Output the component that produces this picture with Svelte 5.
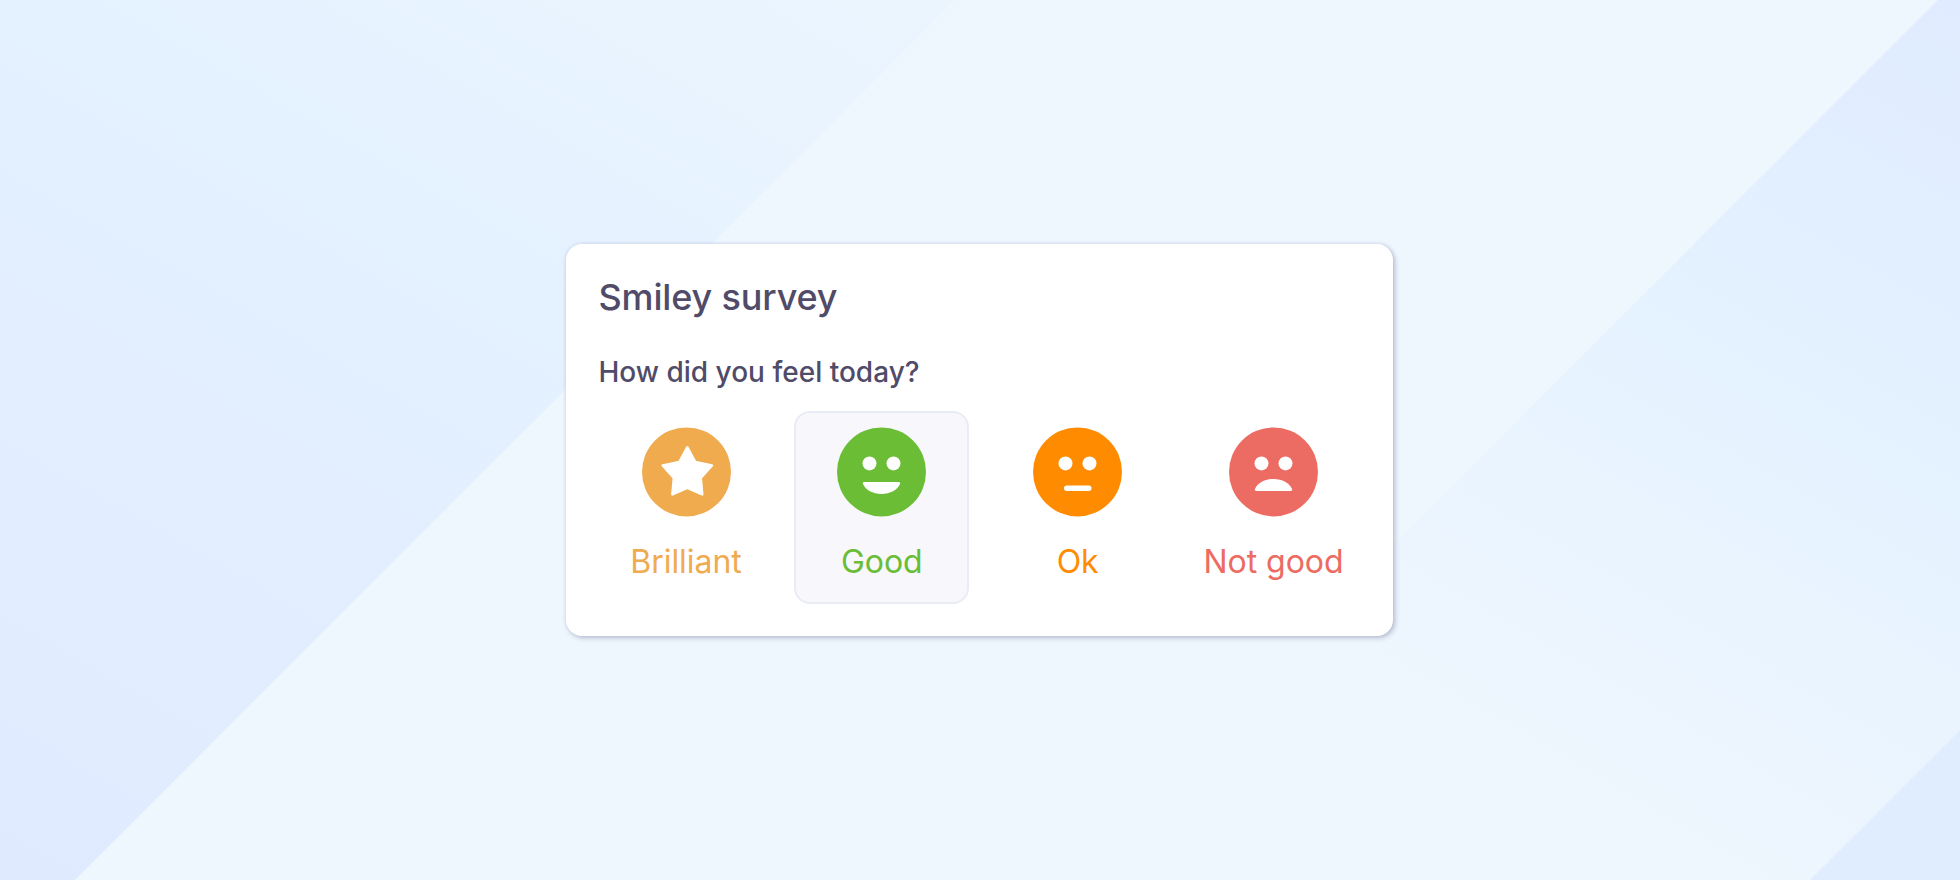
<script>
  const options = [
    { id: 'brilliant', label: 'Brilliant', color: '#f0ab4e' },
    { id: 'good', label: 'Good', color: '#6abd35' },
    { id: 'ok', label: 'Ok', color: '#ff8c00' },
    { id: 'bad', label: 'Not good', color: '#ec6b62' }
  ];
  let selected = $state('good');
</script>

<main class="page">
  <svg class="backdrop" viewBox="0 0 1960 880" aria-hidden="true">
    <defs>
      <linearGradient id="left" gradientUnits="userSpaceOnUse" x1="955" y1="0" x2="334" y2="1076">
        <stop offset="0" stop-color="#ebf5fe" />
        <stop offset=".4" stop-color="#e4f1ff" />
        <stop offset="1" stop-color="#e0eaff" />
      </linearGradient>
      <linearGradient id="right" gradientUnits="userSpaceOnUse" x1="1960" y1="0" x2="1530" y2="745">
        <stop offset="0" stop-color="#e0ebff" />
        <stop offset=".4" stop-color="#e3f1ff" />
        <stop offset="1" stop-color="#eef6fe" />
      </linearGradient>
    </defs>
    <path d="M0 0H955L75 880H0Z" fill="url(#left)" />
    <path d="M1938 0H1960V730L1810 880H1058Z" fill="url(#right)" />
    <path d="M1960 730V880H1810Z" fill="#dfedfe" />
  </svg>

  <section class="card">
    <h1>Smiley survey</h1>
    <h2>How did you feel today?</h2>
    <div class="options">
      {#each options as option}
        <button
          class="option"
          class:selected={selected === option.id}
          style:color={option.color}
          onclick={() => (selected = option.id)}
        >
          <svg class="face" viewBox="0 -0.4 89 89" aria-hidden="true">
            <circle cx="44.5" cy="44.5" r="44.5" fill="currentColor" />
            {#if option.id === 'brilliant'}
              <path
                d="M45.3 20 53.3 34.6 69.9 38 58.7 50.6 60.2 67 45.3 60.4 30.4 67 31.9 50.6 20.7 38 37.3 34.6Z"
                fill="#fff" stroke="#fff" stroke-width="2.6" stroke-linejoin="round"
              />
            {:else}
              <circle cx="32.5" cy="36" r="7" fill="#fff" />
              <circle cx="56.5" cy="36" r="7" fill="#fff" />
              {#if option.id === 'good'}
                <path d="M27.2 54.5H61.8Q63.7 54.5 63.1 56.4C60.6 62.6 53.2 66.5 44.5 66.5S28.4 62.6 25.9 56.4Q25.3 54.5 27.2 54.5Z" fill="#fff" />
              {:else if option.id === 'ok'}
                <rect x="31" y="58" width="27.5" height="5.5" rx="2.7" fill="#fff" />
              {:else}
                <path d="M27.2 63.5H61.8Q63.7 63.5 63.1 61.6C60.6 55.4 53.2 51.5 44.5 51.5S28.4 55.4 25.9 61.6Q25.3 63.5 27.2 63.5Z" fill="#fff" />
              {/if}
            {/if}
          </svg>
          <span class="label">{option.label}</span>
        </button>
      {/each}
    </div>
  </section>
</main>

<style>
  :global(body) {
    margin: 0;
  }
  .page {
    position: relative;
    box-sizing: border-box;
    width: 1960px;
    height: 880px;
    padding-right: 1px;
    display: flex;
    align-items: center;
    justify-content: center;
    background: #eef6fe;
    font-family: Inter, sans-serif;
  }
  .backdrop {
    position: absolute;
    inset: 0;
    width: 100%;
    height: 100%;
  }
  .card {
    position: relative;
    box-sizing: border-box;
    width: 827px;
    height: 392px;
    padding: 31px 32px 32px 32.5px;
    display: flex;
    flex-direction: column;
    background: #fff;
    border-radius: 16px;
    box-shadow: 2px 2px 5px rgba(70, 80, 110, 0.3), 0 0 4px rgba(70, 90, 130, 0.13);
  }
  h1,
  h2 {
    margin: 0;
    color: #504b68;
    font-weight: 500;
    white-space: nowrap;
  }
  h1 {
    font-size: 36px;
    line-height: 44px;
    letter-spacing: -0.15px;
  }
  h2 {
    margin-top: 35px;
    font-size: 28px;
    line-height: 36px;
  }
  .options {
    margin-top: 21px;
    display: flex;
    justify-content: space-between;
  }
  .option {
    box-sizing: border-box;
    width: 175px;
    height: 193px;
    padding: 14px 0 0;
    display: flex;
    flex-direction: column;
    align-items: center;
    border: 2px solid transparent;
    border-radius: 16px;
    background: none;
    font-family: inherit;
  }
  .selected {
    background: #f7f7fc;
    border-color: #eaecf5;
  }
  .face {
    flex: none;
    width: 89px;
    height: 89px;
    overflow: visible;
  }
  .label {
    margin-top: 26px;
    font-size: 32px;
    line-height: 40px;
    font-weight: 400;
    letter-spacing: -0.05px;
    white-space: nowrap;
  }
</style>
